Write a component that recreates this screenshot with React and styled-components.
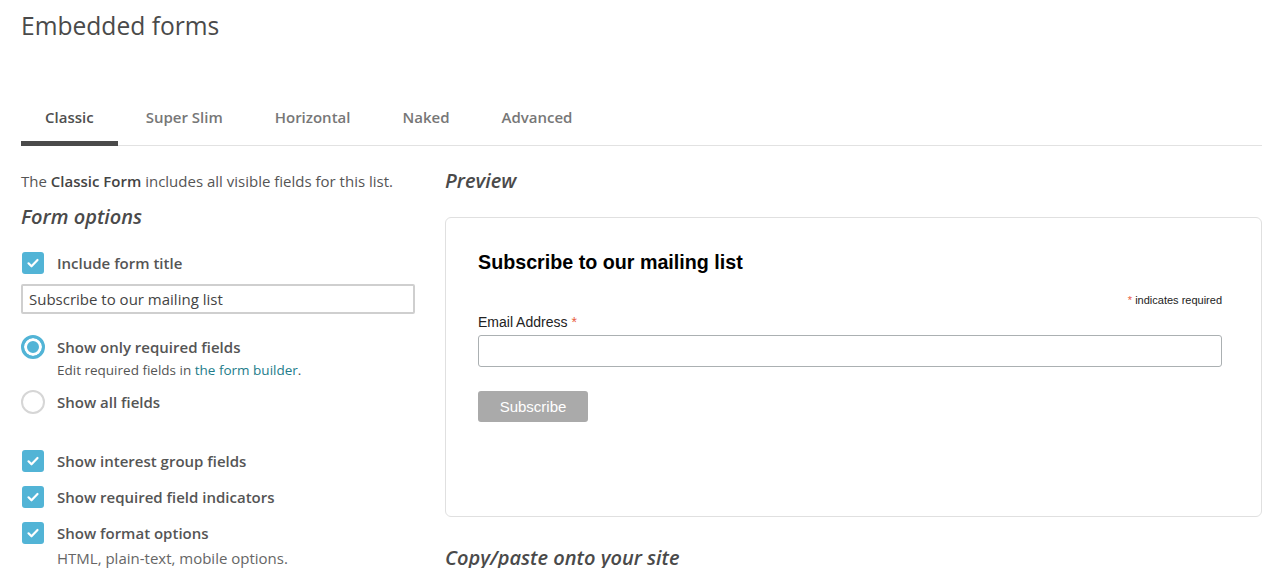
import styled, { createGlobalStyle } from "styled-components";

const GlobalStyle = createGlobalStyle`
  body {
    margin: 0;
    background: #fff;
    font-family: "Open Sans", "Liberation Sans", sans-serif;
    color: #555;
  }
`

const Page = styled.div`
  padding: 0 22px 0 21px;
  height: 568px;
  overflow: hidden;
`

const Title = styled.h1`
  margin: 9px 0 0;
  font-size: 24.6px;
  line-height: 33px;
  font-weight: 400;
  color: #4a4a4a;
`

const TabBar = styled.div`
  display: flex;
  gap: 4px;
  margin-top: 46px;
  border-bottom: 1px solid #e2e2e2;
`

const Tab = styled.div`
  height: 49px;
  padding: 4px 24px 0;
  display: flex;
  align-items: center;
  font-size: 15px;
  font-weight: 600;
  color: ${p => (p.active ? "#4f4f4f" : "#777")};
  border-bottom: 5px solid ${p => (p.active ? "#4a4a4a" : "transparent")};
  margin-bottom: -1px;
`

const Columns = styled.div`
  display: grid;
  grid-template-columns: 394px 1fr;
  gap: 30px;
  margin-top: 25px;
`

const Column = styled.div`
  display: flex;
  flex-direction: column;
`

const Intro = styled.p`
  margin: 0;
  font-size: 15px;
  line-height: 20px;
  color: #555;
  b { font-weight: 600; color: #444; }
`

const SectionTitle = styled.h2`
  margin: ${p => p.top || 0}px 0 0;
  font-size: 20px;
  line-height: 28px;
  font-style: italic;
  font-weight: 600;
  color: #4a4a4a;
`

const OptionRow = styled.div`
  display: flex;
  align-items: center;
  gap: 13px;
  margin-top: ${p => p.top || 0}px;
  font-size: 15px;
  font-weight: 600;
  color: #555;
  line-height: 22px;
`

const Box = styled.span`
  width: 22px;
  height: 22px;
  margin-left: 1px;
  border-radius: 3px;
  background: #52b4d6;
  display: flex;
  align-items: center;
  justify-content: center;
  flex-shrink: 0;
`

const Radio = styled.span`
  width: 24px;
  height: 24px;
  box-sizing: border-box;
  border-radius: 50%;
  flex-shrink: 0;
  border: ${p => (p.checked ? "3px solid #52b4d6" : "2px solid #d6d6d6")};
  background: ${p => (p.checked ? "#52b4d6" : "#fff")};
  box-shadow: ${p => (p.checked ? "inset 0 0 0 3px #fff" : "none")};
  margin-right: -1px;
`

const TextField = styled.div`
  margin-top: 10px;
  height: 30px;
  box-sizing: border-box;
  border: 2px solid #cfcfcf;
  border-radius: 2px;
  padding: 0 6px;
  display: flex;
  align-items: center;
  font-size: 15px;
  color: #444;
`

const Hint = styled.div`
  margin: ${p => p.top || 2}px 0 0 36px;
  font-size: ${p => p.size || 13.5}px;
  line-height: 18px;
  color: ${p => p.color || "#555"};
  a { color: #237c8a; text-decoration: none; }
`

const PreviewCard = styled.div`
  margin-top: 22px;
  height: 300px;
  box-sizing: border-box;
  border: 1px solid #e0e0e0;
  border-radius: 6px;
  padding: 32px 39px 0 32px;
  font-family: "Liberation Sans", Arial, sans-serif;
  display: flex;
  flex-direction: column;
`

const FormTitle = styled.h3`
  margin: 0;
  font-size: 19.7px;
  line-height: 24px;
  font-weight: 700;
  color: #000;
`

const Required = styled.div`
  margin-top: 19px;
  text-align: right;
  font-size: 11px;
  line-height: 14px;
  color: #222;
`

const Star = styled.span`
  color: #e85c41;
`

const FieldLabel = styled.label`
  margin-top: 6px;
  font-size: 14px;
  line-height: 18px;
  color: #222;
`

const EmailInput = styled.div`
  margin-top: 4px;
  height: 32px;
  box-sizing: border-box;
  border: 1px solid #abb0b2;
  border-radius: 3px;
`

const SubscribeButton = styled.button`
  margin-top: 24px;
  width: 110px;
  height: 31px;
  border: none;
  border-radius: 3px;
  background: #aaa;
  color: #fff;
  font-family: "Liberation Sans", Arial, sans-serif;
  font-size: 15px;
`

function Check() {
    return (
        <svg width="16" height="16" viewBox="0 0 16 16" fill="none">
            <path d="M3.5 8.3l3 3L12.5 5" stroke="#fff" strokeWidth="2.2" strokeLinecap="round" strokeLinejoin="round" />
        </svg>
    )
}

const tabs = ["Classic", "Super Slim", "Horizontal", "Naked", "Advanced"]

function App() {
    return (
        <Page>
            <GlobalStyle />
            <Title>Embedded forms</Title>
            <TabBar>
                {tabs.map((t, i) => (
                    <Tab key={t} active={i === 0}>{t}</Tab>
                ))}
            </TabBar>
            <Columns>
                <Column>
                    <Intro>The <b>Classic Form</b> includes all visible fields for this list.</Intro>
                    <SectionTitle top={12}>Form options</SectionTitle>
                    <OptionRow top={21}><Box><Check /></Box>Include form title</OptionRow>
                    <TextField>Subscribe to our mailing list</TextField>
                    <OptionRow top={21}><Radio checked />Show only required fields</OptionRow>
                    <Hint>Edit required fields in <a href="#">the form builder</a>.</Hint>
                    <OptionRow top={11}><Radio />Show all fields</OptionRow>
                    <OptionRow top={36}><Box><Check /></Box>Show interest group fields</OptionRow>
                    <OptionRow top={14}><Box><Check /></Box>Show required field indicators</OptionRow>
                    <OptionRow top={14}><Box><Check /></Box>Show format options</OptionRow>
                    <Hint top={5} size={15} color="#666">HTML, plain-text, mobile options.</Hint>
                </Column>
                <Column>
                    <SectionTitle top={-4}>Preview</SectionTitle>
                    <PreviewCard>
                        <FormTitle>Subscribe to our mailing list</FormTitle>
                        <Required><Star>*</Star> indicates required</Required>
                        <FieldLabel>Email Address <Star>*</Star></FieldLabel>
                        <EmailInput />
                        <div><SubscribeButton>Subscribe</SubscribeButton></div>
                    </PreviewCard>
                    <SectionTitle top={27}>Copy/paste onto your site</SectionTitle>
                </Column>
            </Columns>
        </Page>
    )
}

export default App
